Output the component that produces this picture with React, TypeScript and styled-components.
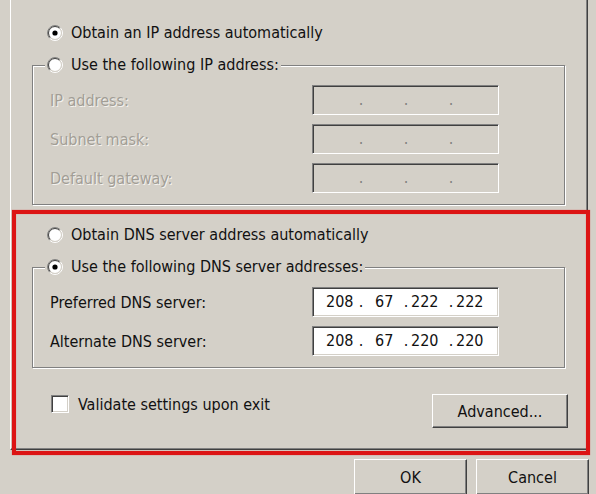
import React from "react";
import styled, { createGlobalStyle } from "styled-components";

const GlobalStyle = createGlobalStyle`
  html, body {
    margin: 0;
    padding: 0;
    background: #d4d0c8;
  }
  body {
    font-family: "DejaVu Sans Condensed", "Liberation Sans", sans-serif;
    font-size: 16px;
    color: #111111;
  }
  #root {
    width: 596px;
    height: 494px;
    overflow: hidden;
  }
`;

const Window = styled.div`
  position: relative;
  width: 596px;
  height: 494px;
  overflow: hidden;
  background: #d4d0c8;
  display: flex;
  flex-direction: column;
`;

const TabPanel = styled.div`
  margin-left: 10px;
  width: 578px;
  box-sizing: border-box;
  display: flex;
  flex-direction: column;
  border-left: 1px solid #ffffff;
  border-right: 1px solid #404040;
  border-bottom: 1px solid #404040;
  box-shadow: inset -1px -1px 0 #808080;
  padding: 23px 22px 21px 21px;
`;

const RadioRow = styled.label<{ $indent: number }>`
  display: flex;
  align-items: center;
  gap: 8px;
  height: 20px;
  line-height: 20px;
  margin-left: ${(p) => p.$indent}px;
  white-space: nowrap;
`;

const Legend = styled(RadioRow)`
  align-self: flex-start;
  margin-top: -11px;
  padding: 0 2px;
  background: #d4d0c8;
`;

const Spaced = styled.div<{ $top: number }>`
  margin-top: ${(p) => p.$top}px;
`;

const GroupBox = styled.div`
  display: flex;
  flex-direction: column;
  margin-top: 22px;
  border: 1px solid #808080;
  box-shadow: inset 1px 1px 0 #ffffff, 1px 1px 0 #ffffff;
  padding-bottom: 11px;
`;

const FieldGrid = styled.div`
  display: grid;
  grid-template-columns: 262px 187px;
  row-gap: 9px;
  align-items: center;
  margin-top: 10px;
  padding-left: 17px;
`;

const FieldLabel = styled.span<{ $disabled?: boolean }>`
  white-space: nowrap;
  color: ${(p) => (p.$disabled ? "#a29e96" : "#111111")};
  text-shadow: ${(p) => (p.$disabled ? "1px 1px 0 #f4f2ee" : "none")};
`;

const IpBox = styled.div<{ $disabled?: boolean }>`
  box-sizing: border-box;
  width: 187px;
  height: 30px;
  border-top: 1px solid #808080;
  border-left: 1px solid #808080;
  border-bottom: 1px solid #ffffff;
  border-right: 1px solid #ffffff;
  box-shadow: inset 1px 1px 0 #404040, inset -1px -1px 0 #d4d0c8;
  background: ${(p) => (p.$disabled ? "#d4d0c8" : "#ffffff")};
  display: grid;
  grid-template-columns: 30px 10px 35px 10px 35px 10px 1fr;
  align-items: center;
  padding-left: 13px;
  color: ${(p) => (p.$disabled ? "#808080" : "#111111")};
  line-height: 20px;
`;

const Octet = styled.span<{ $pad?: number }>`
  padding-left: ${(p) => p.$pad ?? 0}px;
  white-space: nowrap;
`;

const Dot = styled.span`
  text-align: center;
`;

const Footer = styled.div`
  display: flex;
  justify-content: space-between;
  align-items: flex-start;
  margin-top: 26px;
  margin-left: 19px;
  margin-right: -3px;
`;

const CheckRow = styled.label`
  display: flex;
  align-items: center;
  gap: 9px;
  height: 18px;
  margin-top: 1px;
  white-space: nowrap;
`;

const CheckBox = styled.span`
  box-sizing: border-box;
  width: 18px;
  height: 18px;
  background: #ffffff;
  border-top: 1px solid #808080;
  border-left: 1px solid #808080;
  border-bottom: 1px solid #ffffff;
  border-right: 1px solid #ffffff;
  box-shadow: inset 1px 1px 0 #404040, inset -1px -1px 0 #d4d0c8;
`;

const Button = styled.button<{ $w: number; $h: number }>`
  box-sizing: border-box;
  width: ${(p) => p.$w}px;
  height: ${(p) => p.$h}px;
  flex: none;
  padding: 0;
  font: inherit;
  color: #111111;
  background: #d4d0c8;
  border-top: 1px solid #ffffff;
  border-left: 1px solid #ffffff;
  border-bottom: 1px solid #404040;
  border-right: 1px solid #404040;
  box-shadow: inset -1px -1px 0 #808080;
`;

const ButtonBar = styled.div`
  display: flex;
  justify-content: flex-end;
  gap: 9px;
  margin-top: 9px;
  padding-right: 7px;
`;

const Highlight = styled.div`
  position: absolute;
  left: 12px;
  top: 210px;
  width: 578px;
  height: 245px;
  box-sizing: border-box;
  border: 4px solid #dc1414;
  box-shadow: 0 0 1px rgba(220, 20, 20, 0.6), inset 0 0 1px rgba(220, 20, 20, 0.6);
  pointer-events: none;
`;

const Radio: React.FC<{ checked?: boolean }> = ({ checked }) => {
  const c = 8;
  const k = 0.7071;
  const arc = (r: number, from: 1 | -1) => {
    const x1 = c - from * r * k;
    const y1 = c + from * r * k;
    const x2 = c + from * r * k;
    const y2 = c - from * r * k;
    return `M ${x1} ${y1} A ${r} ${r} 0 0 1 ${x2} ${y2}`;
  };
  return (
    <svg width="16" height="16" viewBox="0 0 16 16" style={{ flex: "none" }}>
      <circle cx={c} cy={c} r={6.2} fill="#ffffff" />
      <path d={arc(7.5, 1)} stroke="#808080" strokeWidth="1" fill="none" />
      <path d={arc(7.5, -1)} stroke="#ffffff" strokeWidth="1" fill="none" />
      <path d={arc(6.5, 1)} stroke="#404040" strokeWidth="1" fill="none" />
      <path d={arc(6.5, -1)} stroke="#d4d0c8" strokeWidth="1" fill="none" />
      {checked && <circle cx={c} cy={c} r={2.6} fill="#000000" />}
    </svg>
  );
};

const IpAddress: React.FC<{ octets?: string[]; disabled?: boolean }> = ({ octets = ["", "", "", ""], disabled }) => (
  <IpBox $disabled={disabled}>
    <Octet>{octets[0]}</Octet>
    <Dot>.</Dot>
    <Octet $pad={9}>{octets[1]}</Octet>
    <Dot>.</Dot>
    <Octet>{octets[2]}</Octet>
    <Dot>.</Dot>
    <Octet>{octets[3]}</Octet>
  </IpBox>
);

export default function App() {
  return (
    <>
      <GlobalStyle />
      <Window>
        <TabPanel>
          <RadioRow $indent={15}>
            <Radio checked />
            <span>Obtain an IP address automatically</span>
          </RadioRow>
          <GroupBox>
            <Legend $indent={12}>
              <Radio />
              <span>Use the following IP address:</span>
            </Legend>
            <FieldGrid>
              <FieldLabel $disabled>IP address:</FieldLabel>
              <IpAddress disabled />
              <FieldLabel $disabled>Subnet mask:</FieldLabel>
              <IpAddress disabled />
              <FieldLabel $disabled>Default gateway:</FieldLabel>
              <IpAddress disabled />
            </FieldGrid>
          </GroupBox>
          <Spaced $top={20}>
            <RadioRow $indent={15}>
              <Radio />
              <span>Obtain DNS server address automatically</span>
            </RadioRow>
          </Spaced>
          <GroupBox>
            <Legend $indent={12}>
              <Radio checked />
              <span>Use the following DNS server addresses:</span>
            </Legend>
            <FieldGrid>
              <FieldLabel>Preferred DNS server:</FieldLabel>
              <IpAddress octets={["208", "67", "222", "222"]} />
              <FieldLabel>Alternate DNS server:</FieldLabel>
              <IpAddress octets={["208", "67", "220", "220"]} />
            </FieldGrid>
          </GroupBox>
          <Footer>
            <CheckRow>
              <CheckBox />
              <span>Validate settings upon exit</span>
            </CheckRow>
            <Button $w={136} $h={34}>Advanced...</Button>
          </Footer>
        </TabPanel>
        <ButtonBar>
          <Button $w={113} $h={36}>OK</Button>
          <Button $w={113} $h={36}>Cancel</Button>
        </ButtonBar>
        <Highlight />
      </Window>
    </>
  );
}
